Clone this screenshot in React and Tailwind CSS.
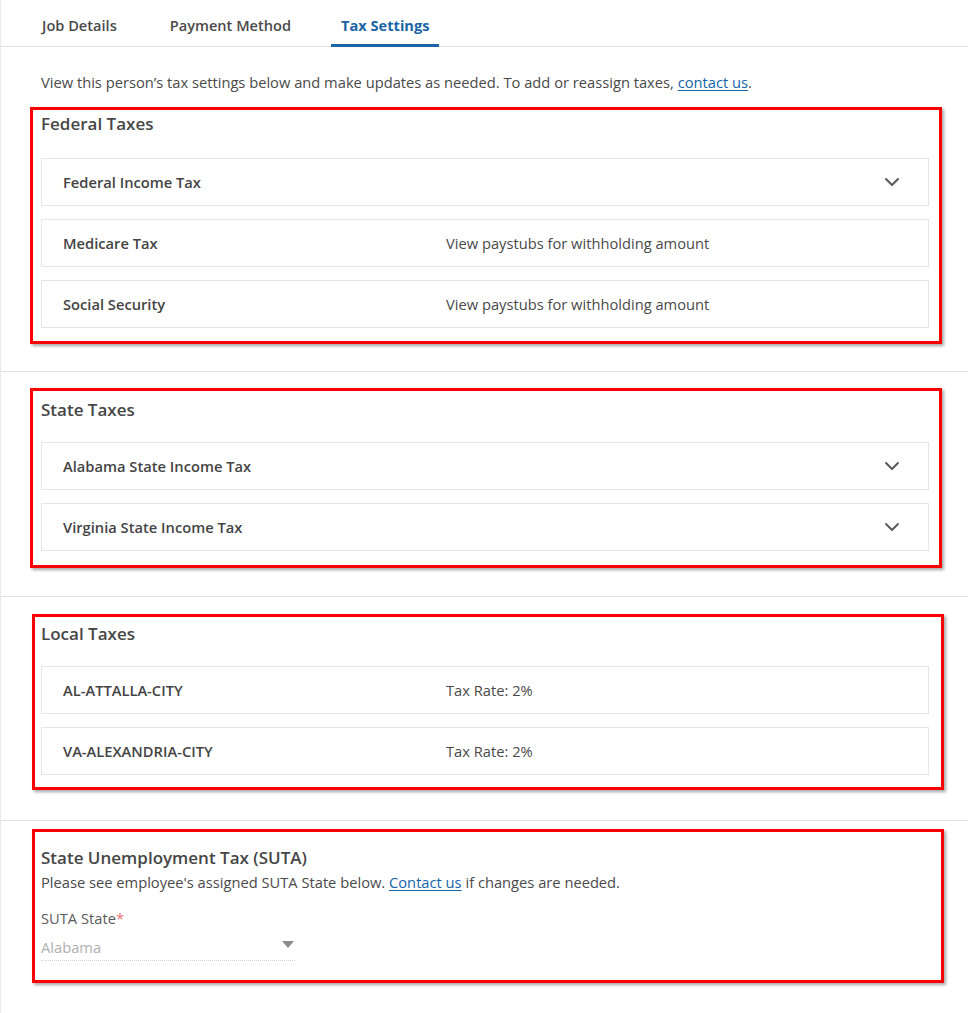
import React from "react";

const font = { fontFamily: '"Open Sans", "Liberation Sans", sans-serif' };

function Chevron() {
  return (
    <svg width="16" height="10" viewBox="0 0 16 10" fill="none">
      <path d="M2 2l6 6 6-6" stroke="#5a5a5a" strokeWidth="2" strokeLinecap="round" strokeLinejoin="round" />
    </svg>
  );
}

function Row({ name, detail, expandable }) {
  return (
    <div className="flex items-center h-[48px] border border-[#e6e6e6] bg-white pl-[21px] pr-[28px]">
      <div className="w-[383px] text-[14.7px] font-semibold text-[#444]">{name}</div>
      <div className="flex-1 text-[14.7px] text-[#4a4a4a]">{detail}</div>
      {expandable && <Chevron />}
    </div>
  );
}

function RedBox({ className }) {
  return (
    <div
      className={
        "absolute pointer-events-none border-[3px] border-[#ff0000] shadow-[2px_2px_3px_rgba(0,0,0,0.35)] " +
        className
      }
    />
  );
}

export default function App() {
  return (
    <div className="min-h-screen bg-white border-l border-[#e8e8e8] text-[#444]" style={font}>
      {/* tabs */}
      <div className="flex h-[47px] border-b border-[#dedede] pl-[31px]">
        <div className="px-[10px] pt-[15px] text-[14.6px] font-semibold text-[#4a4a4a]">Job Details</div>
        <div className="ml-[33px] px-[10px] pt-[15px] text-[14.6px] font-semibold text-[#4a4a4a]">Payment Method</div>
        <div className="ml-[30px] px-[10px] pt-[15px] text-[14.6px] font-bold text-[#1a65a6] border-b-[3px] border-[#1a65a6] -mb-px">
          Tax Settings
        </div>
      </div>

      {/* federal */}
      <div className="pl-[40px] pr-[39px] pt-[25px] pb-[43px] border-b border-[#e2e2e2]">
        <p className="text-[14.7px] leading-[20px] text-[#4a4a4a]">
          View this person’s tax settings below and make updates as needed. To add or reassign taxes,{" "}
          <a href="#" className="text-[#1565a8] underline underline-offset-2">contact us</a>.
        </p>
        <div className="relative mt-[20px]">
          <RedBox className="-top-[5px] -left-[11px] -right-[13px] -bottom-[16px]" />
          <h2 className="text-[17px] leading-[24px] font-semibold text-[#464646]">Federal Taxes</h2>
          <div className="mt-[22px] flex flex-col gap-[13px]">
            <Row name="Federal Income Tax" expandable />
            <Row name="Medicare Tax" detail="View paystubs for withholding amount" />
            <Row name="Social Security" detail="View paystubs for withholding amount" />
          </div>
        </div>
      </div>

      {/* state */}
      <div className="pl-[40px] pr-[39px] pt-[26px] pb-[45px] border-b border-[#e2e2e2]">
        <div className="relative">
          <RedBox className="-top-[10px] -left-[11px] -right-[13px] -bottom-[17px]" />
          <h2 className="text-[17px] leading-[24px] font-semibold text-[#464646]">State Taxes</h2>
          <div className="mt-[20px] flex flex-col gap-[13px]">
            <Row name="Alabama State Income Tax" expandable />
            <Row name="Virginia State Income Tax" expandable />
          </div>
        </div>
      </div>

      {/* local */}
      <div className="pl-[40px] pr-[39px] pt-[25px] pb-[45px] border-b border-[#e2e2e2]">
        <div className="relative">
          <RedBox className="-top-[8px] -left-[9px] -right-[15px] -bottom-[15px]" />
          <h2 className="text-[17px] leading-[24px] font-semibold text-[#464646]">Local Taxes</h2>
          <div className="mt-[20px] flex flex-col gap-[13px]">
            <Row name="AL-ATTALLA-CITY" detail="Tax Rate: 2%" />
            <Row name="VA-ALEXANDRIA-CITY" detail="Tax Rate: 2%" />
          </div>
        </div>
      </div>

      {/* suta */}
      <div className="pl-[40px] pr-[39px] pt-[25px] pb-[40px]">
        <div className="relative">
          <RedBox className="-top-[17px] -left-[9px] -right-[15px] -bottom-[22px]" />
          <h2 className="text-[17px] leading-[24px] font-semibold text-[#464646]">State Unemployment Tax (SUTA)</h2>
          <p className="text-[14.7px] leading-[24px] text-[#4a4a4a]">
            Please see employee's assigned SUTA State below.{" "}
            <a href="#" className="text-[#1565a8] underline underline-offset-2">Contact us</a> if changes are needed.
          </p>
          <div className="mt-[12px] text-[14.7px] leading-[24px] text-[#5a5a5a]">
            SUTA State<span className="text-[#e57373]">*</span>
          </div>
          <div className="mt-[6px] w-[254px] flex items-center justify-between border-b border-dotted border-[#cfcfcf] pb-[2px]">
            <span className="text-[14.7px] leading-[22px] text-[#b0b0b0]">Alabama</span>
            <svg width="12" height="8" viewBox="0 0 12 8" className="mr-[1px] -mt-[4px]">
              <path d="M0 0h12L6 7z" fill="#8a8a8a" />
            </svg>
          </div>
        </div>
      </div>
    </div>
  );
}
